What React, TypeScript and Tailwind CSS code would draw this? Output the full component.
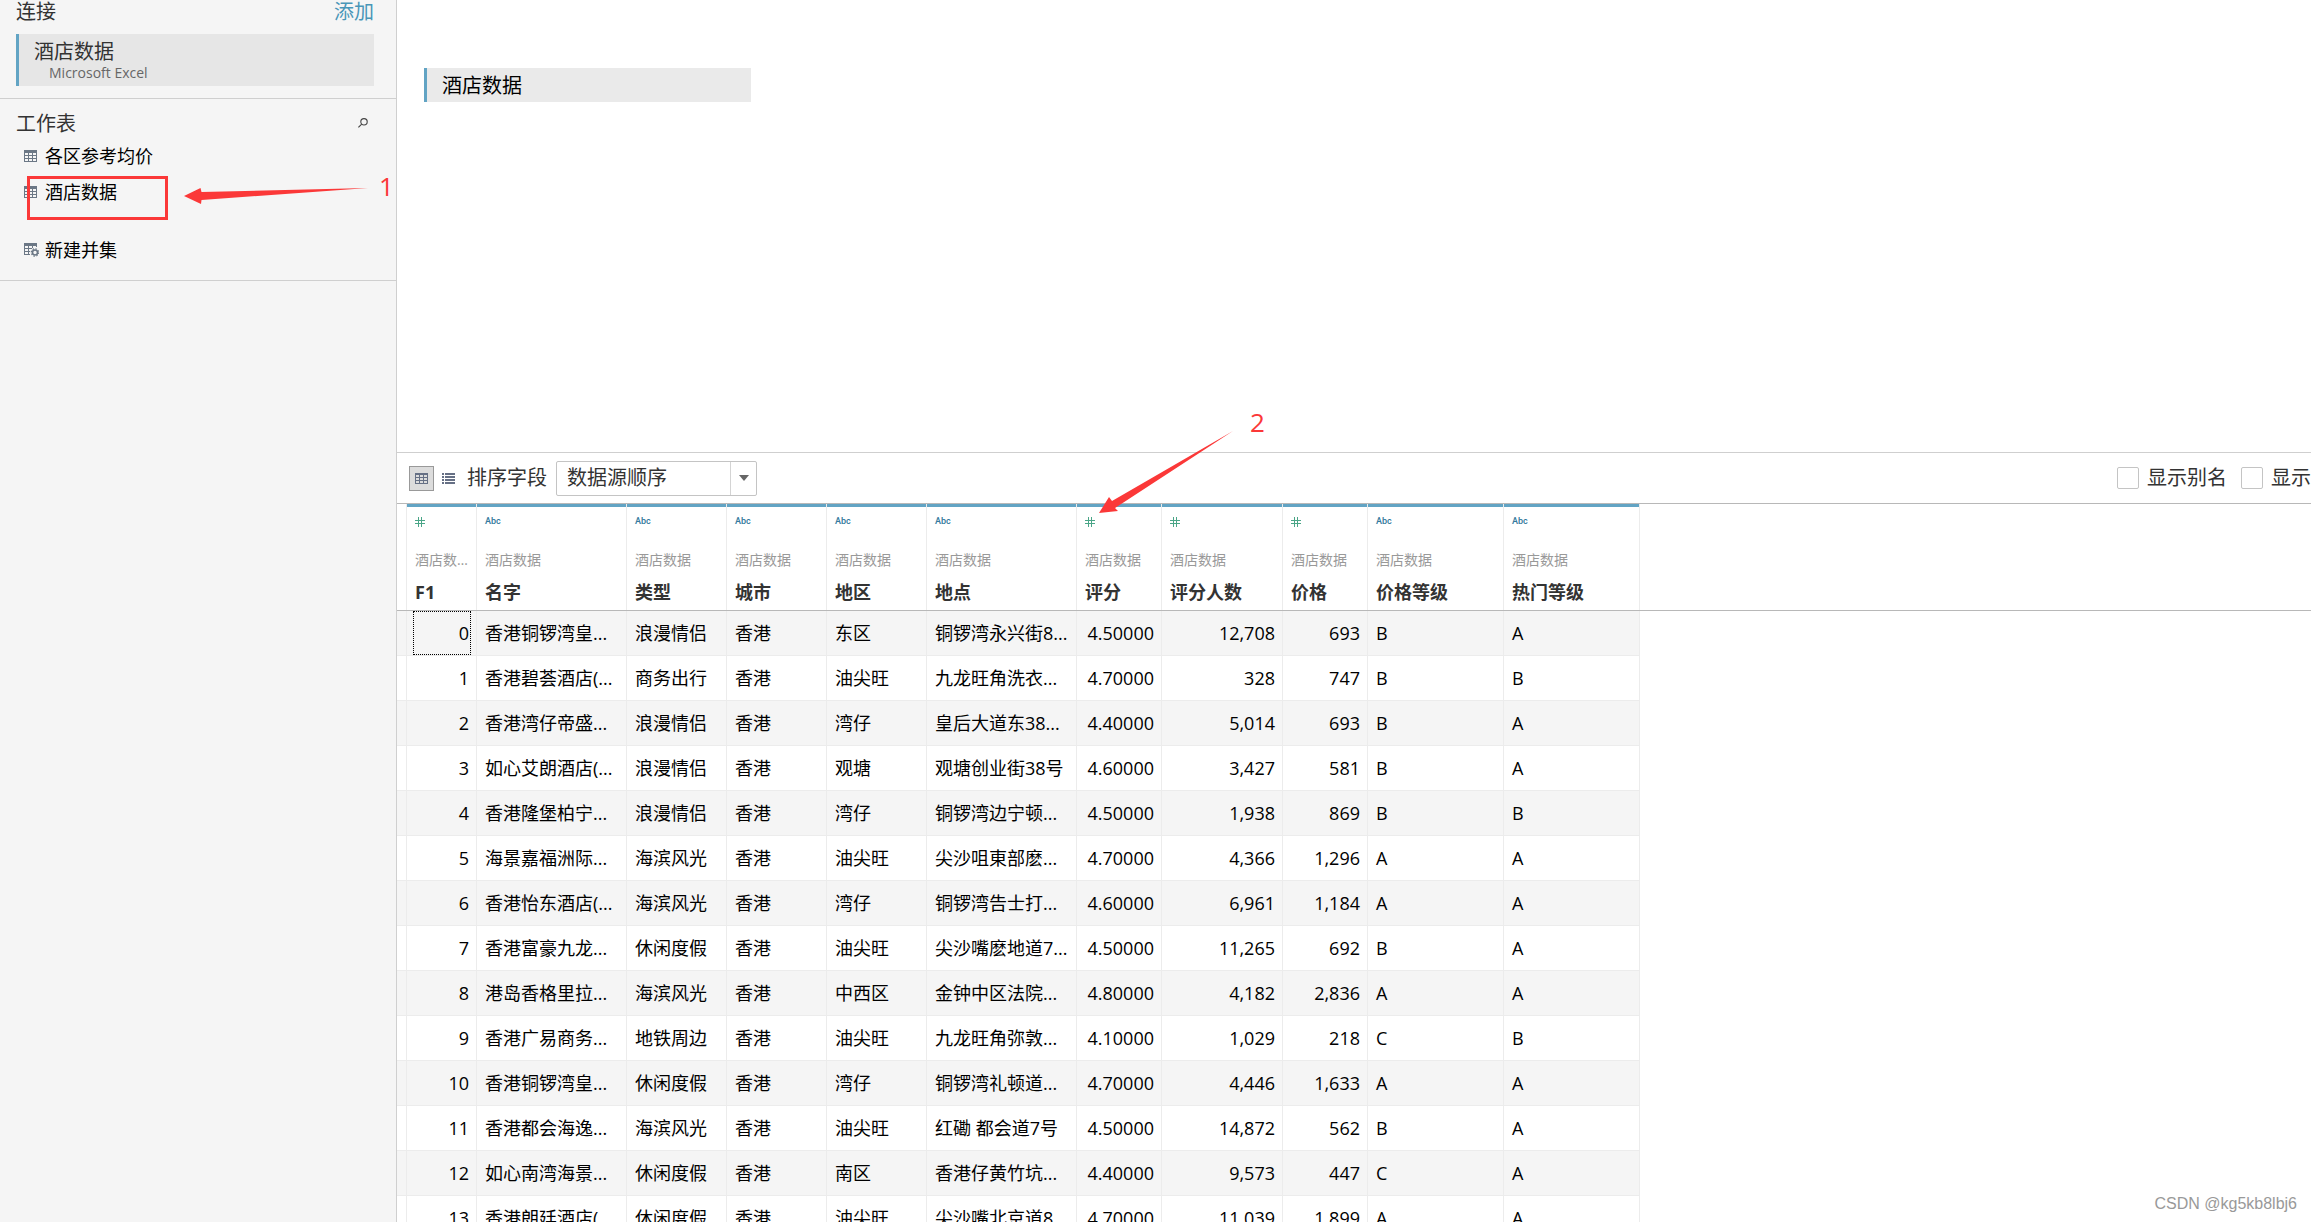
import { useState } from "react";

type Column = {
  name: string;
  kind: "number" | "text";
  width: string;
};

const columns: Column[] = [
  { name: "F1", kind: "number", width: "w-[70px]" },
  { name: "名字", kind: "text", width: "w-[150px]" },
  { name: "类型", kind: "text", width: "w-[100px]" },
  { name: "城市", kind: "text", width: "w-[100px]" },
  { name: "地区", kind: "text", width: "w-[100px]" },
  { name: "地点", kind: "text", width: "w-[150px]" },
  { name: "评分", kind: "number", width: "w-[85px]" },
  { name: "评分人数", kind: "number", width: "w-[121px]" },
  { name: "价格", kind: "number", width: "w-[85px]" },
  { name: "价格等级", kind: "text", width: "w-[136px]" },
  { name: "热门等级", kind: "text", width: "w-[136px]" },
];

const rows = [
  ["0", "香港铜锣湾皇...", "浪漫情侣", "香港", "东区", "铜锣湾永兴街8...", "4.50000", "12,708", "693", "B", "A"],
  ["1", "香港碧荟酒店(...", "商务出行", "香港", "油尖旺", "九龙旺角洗衣...", "4.70000", "328", "747", "B", "B"],
  ["2", "香港湾仔帝盛...", "浪漫情侣", "香港", "湾仔", "皇后大道东38...", "4.40000", "5,014", "693", "B", "A"],
  ["3", "如心艾朗酒店(...", "浪漫情侣", "香港", "观塘", "观塘创业街38号", "4.60000", "3,427", "581", "B", "A"],
  ["4", "香港隆堡柏宁...", "浪漫情侣", "香港", "湾仔", "铜锣湾边宁顿...", "4.50000", "1,938", "869", "B", "B"],
  ["5", "海景嘉福洲际...", "海滨风光", "香港", "油尖旺", "尖沙咀東部麽...", "4.70000", "4,366", "1,296", "A", "A"],
  ["6", "香港怡东酒店(...", "海滨风光", "香港", "湾仔", "铜锣湾告士打...", "4.60000", "6,961", "1,184", "A", "A"],
  ["7", "香港富豪九龙...", "休闲度假", "香港", "油尖旺", "尖沙嘴麽地道7...", "4.50000", "11,265", "692", "B", "A"],
  ["8", "港岛香格里拉...", "海滨风光", "香港", "中西区", "金钟中区法院...", "4.80000", "4,182", "2,836", "A", "A"],
  ["9", "香港广易商务...", "地铁周边", "香港", "油尖旺", "九龙旺角弥敦...", "4.10000", "1,029", "218", "C", "B"],
  ["10", "香港铜锣湾皇...", "休闲度假", "香港", "湾仔", "铜锣湾礼顿道...", "4.70000", "4,446", "1,633", "A", "A"],
  ["11", "香港都会海逸...", "海滨风光", "香港", "油尖旺", "红磡 都会道7号", "4.50000", "14,872", "562", "B", "A"],
  ["12", "如心南湾海景...", "休闲度假", "香港", "南区", "香港仔黄竹坑...", "4.40000", "9,573", "447", "C", "A"],
  ["13", "香港朗廷酒店(...", "休闲度假", "香港", "油尖旺", "尖沙嘴北京道8...", "4.70000", "11,039", "1,899", "A", "A"],
];

function SheetIcon() {
  return (
    <svg width="13" height="12" viewBox="0 0 13 12" shapeRendering="crispEdges">
      <path
        fill="#6b7785"
        fillRule="evenodd"
        d="M0 0h13v12H0zM1 3h3v2H1zM5 3h3v2H5zM9 3h3v2H9zM1 6h3v2H1zM5 6h3v2H5zM9 6h3v2H9zM1 9h3v2H1zM5 9h3v2H5zM9 9h3v2H9z"
      />
    </svg>
  );
}

function GridIcon() {
  return (
    <svg width="13" height="11" viewBox="0 0 13 11" shapeRendering="crispEdges">
      <path
        fill="#667085"
        fillRule="evenodd"
        d="M0 0h13v11H0zM1 2h3v2H1zM5 2h3v2H5zM9 2h3v2H9zM1 5h3v2H1zM5 5h3v2H5zM9 5h3v2H9zM1 8h3v2H1zM5 8h3v2H5zM9 8h3v2H9z"
      />
    </svg>
  );
}

function UnionIcon() {
  return (
    <svg width="15" height="14" viewBox="0 0 15 14">
      <path
        fill="#6b7785"
        shapeRendering="crispEdges"
        d="M0 0h13v3H0zM0 3h1v9H0zM4 3h1v9H4zM8 3h1v2H8zM12 3h1v1h-1zM0 5h8v1H0zM0 8h6v1H0zM0 11h6v1H0z"
      />
      <circle cx="11" cy="9.500" r="2.500" fill="none" stroke="#6b7785" strokeWidth="1.600" />
      <circle cx="11" cy="9.500" r="3.700" fill="none" stroke="#6b7785" strokeWidth="1.200" strokeDasharray="1.450 1.450" />
    </svg>
  );
}

function HashIcon() {
  return (
    <svg width="10" height="10" viewBox="0 0 10 10" shapeRendering="crispEdges">
      <path fill="#4aa587" d="M3 0h1v10H3zM6 0h1v10H6zM0 3h10v1H0zM0 6h10v1H0z" />
    </svg>
  );
}

function SheetItem({ label }: { label: string }) {
  return (
    <li>
      <button className="flex h-9 items-center gap-2 text-lg text-black">
        <SheetIcon />
        {label}
      </button>
    </li>
  );
}

function Sidebar() {
  return (
    <aside className="relative w-[397px] shrink-0 border-r border-[#cfcfcf] bg-[#f5f5f5]">
      <section className="h-[99px] border-b border-[#cfcfcf] pl-4 pr-[22px]">
        <div className="flex h-[34px] items-start justify-between text-xl leading-6 text-[#333]">
          <h2>连接</h2>
          <a href="#add" className="text-[#4996b8]">
            添加
          </a>
        </div>
        <div className="h-[52px] border-l-3 border-[#62a4c4] bg-[#e6e6e6] pl-[15px] pt-1.5 text-[#333]">
          <p className="text-xl leading-6">酒店数据</p>
          <p className="pl-[15px] text-sm leading-[18px] text-[#666]">Microsoft Excel</p>
        </div>
      </section>
      <section className="h-[182px] border-b border-[#cfcfcf] pl-4 pr-7 pt-2">
        <div className="flex h-8 items-center justify-between text-xl leading-8 text-[#333]">
          <h2 className="pt-0.5">工作表</h2>
          <button aria-label="搜索">
            <svg width="10" height="10" viewBox="0 0 10 10" fill="none" stroke="#444" strokeWidth="1.100">
              <circle cx="6" cy="3.800" r="3.200" />
              <path d="M3.700 6.100L.4 9.400" />
            </svg>
          </button>
        </div>
        <ul className="-mt-px pl-2">
          <SheetItem label="各区参考均价" />
          <SheetItem label="酒店数据" />
        </ul>
        <button className="ml-2 mt-[22px] flex h-9 items-center gap-1.5 text-lg text-black">
          <UnionIcon />
          新建并集
        </button>
      </section>

      {/* first marker */}
      <div className="absolute left-[27px] top-[176px] h-11 w-[141px] border-3 border-[#fb3838]" />
      <svg className="absolute left-[184px] top-[187px]" width="184" height="18" viewBox="0 0 184 18">
        <path fill="#fb3838" d="M0 9L16.500 1l1 4L184 1 17.500 13l-.5 4z" />
      </svg>
      <span className="absolute left-[379px] top-[170px] text-[26px] leading-8 text-[#fb3838]">1</span>
    </aside>
  );
}

function Toolbar() {
  const [aliases, setAliases] = useState(false);
  const [hidden, setHidden] = useState(false);

  return (
    <div className="flex h-[52px] items-center overflow-hidden border-y border-t-[#cfcfcf] border-b-[#b8b8b8] pl-3 text-xl text-[#333]">
      <button aria-label="网格" className="flex size-[25px] items-center justify-center border border-[#999] bg-[#dcdcdc]">
        <GridIcon />
      </button>
      <button aria-label="列表" className="ml-2">
        <svg width="13" height="11" viewBox="0 0 13 11" shapeRendering="crispEdges">
          <path
            fill="#667085"
            d="M0 0h2v2H0zM3 0h10v2H3zM0 3h2v2H0zM3 3h10v2H3zM0 6h2v2H0zM3 6h10v2H3zM0 9h2v2H0zM3 9h10v2H3z"
          />
        </svg>
      </button>
      <label htmlFor="sort" className="ml-3">
        排序字段
      </label>
      <div className="relative ml-[9px]">
        <select
          id="sort"
          className="h-[35px] w-[201px] appearance-none rounded-xs border border-[#c4c4c4] bg-white pl-2.5 text-xl leading-8"
        >
          <option>数据源顺序</option>
        </select>
        <span className="pointer-events-none absolute inset-y-px right-0 flex w-[27px] items-center justify-center border-l border-[#d4d4d4]">
          <svg width="10" height="6" viewBox="0 0 10 6">
            <path fill="#666" d="M0 0h10L5 6z" />
          </svg>
        </span>
      </div>
      <div className="ml-auto flex shrink-0 items-center">
        <input
          id="aliases"
          type="checkbox"
          checked={aliases}
          onChange={() => setAliases(!aliases)}
          className="size-[22px] appearance-none rounded-xs border border-[#c4c4c4] bg-white checked:bg-[#62a4c4]"
        />
        <label htmlFor="aliases" className="ml-2 mr-3.5">
          显示别名
        </label>
        <input
          id="hidden"
          type="checkbox"
          checked={hidden}
          onChange={() => setHidden(!hidden)}
          className="size-[22px] appearance-none rounded-xs border border-[#c4c4c4] bg-white checked:bg-[#62a4c4]"
        />
        <label htmlFor="hidden" className="ml-2">
          显示
        </label>
      </div>
    </div>
  );
}

function DataGrid() {
  return (
    <div className="relative min-h-0 flex-1 overflow-hidden">
      {/* header rule runs on past the last column */}
      <div className="absolute inset-x-0 top-[106px] h-px bg-[#b8b8b8]" />
      <table className="w-[1243px] table-fixed border-separate border-spacing-0">
        <thead>
          <tr>
            <th aria-hidden="true" className="w-2.5 border-r border-[#ececec]" />
            {columns.map((column) => (
              <th
                key={column.name}
                className={`h-[107px] border-r border-b border-r-[#ececec] border-b-[#b8b8b8] p-0 text-left align-top ${column.width}`}
              >
                <div className="h-[3px] bg-[#62a4c4]" />
                <div className="flex h-[30px] items-center pl-2">
                  {column.kind === "number" ? (
                    <HashIcon />
                  ) : (
                    <span className="font-[Roboto] text-[9px] font-medium text-[#31789b]">Abc</span>
                  )}
                </div>
                <p className="mt-[11px] truncate px-2 text-sm leading-6 font-normal text-[#999]">
                  {column.name === "F1" ? "酒店数..." : "酒店数据"}
                </p>
                <p className="mt-1.5 pl-2 text-lg leading-7 font-bold text-[#333]">{column.name}</p>
              </th>
            ))}
          </tr>
        </thead>
        <tbody>
          {rows.map((row, i) => (
            <tr key={row[0]} className="odd:bg-[#f5f5f5]">
              <td aria-hidden="true" className="border-r border-b border-[#ececec]" />
              {row.map((cell, j) => (
                <td
                  key={j}
                  className={`relative h-[45px] border-r border-b border-[#ececec] py-0 text-lg whitespace-nowrap text-black ${
                    columns[j].kind === "number" ? "pr-[7px] text-right" : "pl-2 text-left"
                  }`}
                >
                  {cell}
                  {i === 0 && j === 0 && (
                    <span className="absolute top-0 right-[5px] h-11 w-[58px] border border-dotted border-black" />
                  )}
                </td>
              ))}
            </tr>
          ))}
        </tbody>
      </table>
    </div>
  );
}

export default function App() {
  return (
    <div className="relative flex h-screen overflow-hidden bg-white font-['Open_Sans','Noto_Sans_CJK_SC',sans-serif]">
      <Sidebar />
      <main className="flex min-w-0 flex-1 flex-col">
        <section className="relative h-[452px] shrink-0 pt-[68px] pl-[27px]">
          <div className="flex h-[34px] w-[327px] items-center border-l-3 border-[#62a4c4] bg-[#eaeaea] pt-0.5 pl-[15px] text-xl text-black">
            酒店数据
          </div>

          {/* second marker, its arrow reaches into the grid below */}
          <svg className="absolute top-[430px] left-[702px] z-10" width="134" height="84" viewBox="0 0 134 84">
            <path fill="#fb3838" d="M0 83L10 67l3 4L134 1 16 78l3 3z" />
          </svg>
          <span className="absolute top-[406px] left-[853px] text-[26px] leading-8 text-[#fb3838]">2</span>
        </section>
        <Toolbar />
        <DataGrid />
      </main>
      <p className="absolute right-3.5 bottom-1.5 font-['Liberation_Sans',sans-serif] text-base leading-6 text-[#999]">
        CSDN @kg5kb8lbj6
      </p>
    </div>
  );
}
